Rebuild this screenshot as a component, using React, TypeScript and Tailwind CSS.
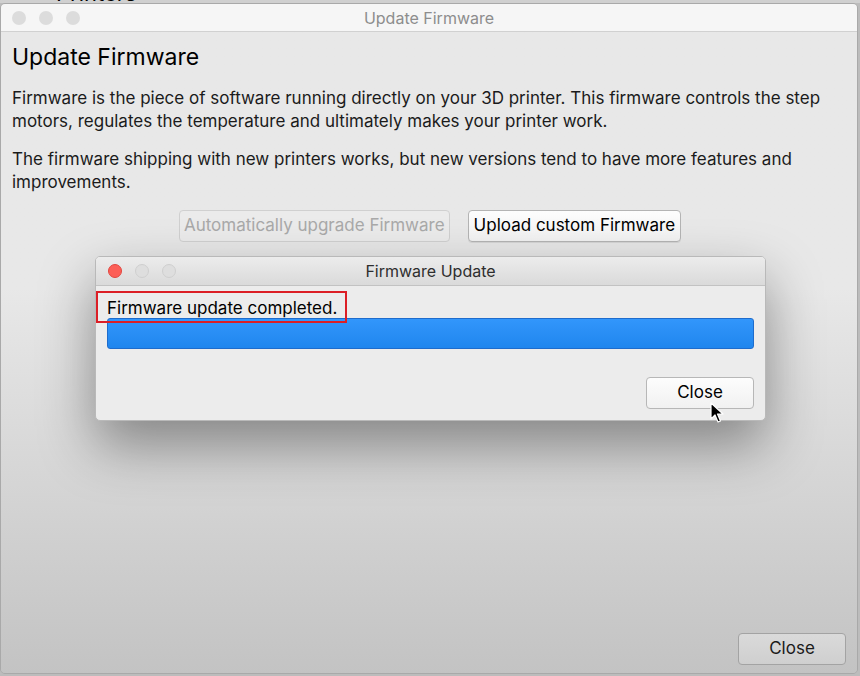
export default function App() {
  const font = { fontFamily: 'Inter, "Liberation Sans", Arial, sans-serif' };
  return (
    <div className="w-[860px] h-[676px] bg-[#bcbcbc] overflow-hidden flex flex-col" style={font}>
      {/* strip of the window behind */}
      <div className="relative h-[3px] shrink-0 overflow-hidden bg-[#d0d0d0]">
        <span className="absolute left-[56px] -top-[18px] text-[22px] leading-[22px] text-black">Printers</span>
      </div>

      <div className="relative w-[858px] h-[671px] flex flex-col rounded-[5px] border border-[#a9a9a9] overflow-hidden">
        {/* title bar */}
        <div className="relative h-[28px] shrink-0 flex items-center justify-center bg-[#f6f6f6] border-b border-[#d1d1d1]">
          <div className="absolute left-[11px] top-[7px] flex gap-[13px]">
            <span className="w-[14px] h-[14px] rounded-full bg-[#dcdcdc]" />
            <span className="w-[14px] h-[14px] rounded-full bg-[#dcdcdc]" />
            <span className="w-[14px] h-[14px] rounded-full bg-[#dcdcdc]" />
          </div>
          <span className="text-[16px] text-[#8d8d8d]">Update Firmware</span>
        </div>

        {/* body */}
        <div className="flex-1 flex flex-col px-[11px] pt-[11px] pb-[8px] bg-gradient-to-b from-[#e8e8e8] from-40% to-[#c3c3c3] text-[#1b1b1b]">
          <h1 className="text-[23px] leading-[29px] text-black">Update Firmware</h1>
          <p className="mt-[15px] text-[17px] leading-[23px]">
            Firmware is the piece of software running directly on your 3D printer. This firmware controls the step motors, regulates the temperature and ultimately makes your printer work.
          </p>
          <p className="mt-[15px] text-[17px] leading-[23px]">
            The firmware shipping with new printers works, but new versions tend to have more features and improvements.
          </p>
          <div className="mt-[16px] flex justify-center gap-[18px] pl-[2px]">
            <button className="h-[32px] px-[4px] rounded-[4px] border border-[#d0d0d0] bg-[#ebebeb] text-[17px] text-[#a9a9a9]">
              Automatically upgrade Firmware
            </button>
            <button className="h-[32px] px-[5px] rounded-[4px] border border-[#b4b4b4] bg-gradient-to-b from-[#fdfdfd] to-[#f2f2f2] text-[17px] text-black shadow-[0_1px_0_rgba(0,0,0,0.08)]">
              Upload custom Firmware
            </button>
          </div>
          <div className="flex-1" />
          <div className="flex justify-end">
            <button className="w-[108px] h-[32px] rounded-[4px] border border-[#a3a3a3] bg-gradient-to-b from-[#dadada] to-[#cfcfcf] text-[17px] text-[#1b1b1b]">
              Close
            </button>
          </div>
        </div>

        {/* modal dialog */}
        <div className="absolute left-[94px] top-[252px] w-[671px] h-[165px] rounded-[5px] border border-[#b9b9b9] bg-[#ececec] shadow-[0_24px_55px_rgba(0,0,0,0.4)] flex flex-col overflow-hidden">
          <div className="relative h-[29px] shrink-0 flex items-center justify-center bg-gradient-to-b from-[#ececec] to-[#dadada] border-b border-[#c2c2c2]">
            <div className="absolute left-[12px] top-[7px] flex gap-[13px]">
              <span className="w-[14px] h-[14px] rounded-full bg-[#fc5f57] border border-[#e2463f]" />
              <span className="w-[14px] h-[14px] rounded-full bg-[#dedede] border border-[#cfcfcf]" />
              <span className="w-[14px] h-[14px] rounded-full bg-[#dedede] border border-[#cfcfcf]" />
            </div>
            <span className="text-[16px] text-[#2e2e2e]">Firmware Update</span>
          </div>
          <div className="flex flex-col px-[11px] pt-[10px]">
            <div className="relative">
              <span className="text-[17px] leading-[22px] text-black">Firmware update completed.</span>
              <div className="absolute -left-[11px] -top-[5px] w-[251px] h-[32px] border-2 border-[#dc1f26]" />
            </div>
            <div className="mt-[-2px] h-[31px] rounded-[3px] border border-[#1e6ccc] bg-gradient-to-b from-[#3296fb] to-[#1f86ee]" />
            <div className="mt-[28px] flex justify-end">
              <button className="w-[108px] h-[32px] rounded-[4px] border border-[#b7b7b7] bg-gradient-to-b from-[#fdfdfd] to-[#f1f1f1] text-[17px] text-black">
                Close
              </button>
            </div>
          </div>
        </div>

        {/* mouse cursor */}
        <svg className="absolute left-[709px] top-[398px]" width="14" height="22" viewBox="0 0 14 22">
          <path d="M1 1 L1 17 L5 13 L8 20 L10.5 19 L7.5 12 L13 12 Z" fill="#000" stroke="#fff" strokeWidth="1.2" strokeLinejoin="round" />
        </svg>
      </div>
    </div>
  );
}
